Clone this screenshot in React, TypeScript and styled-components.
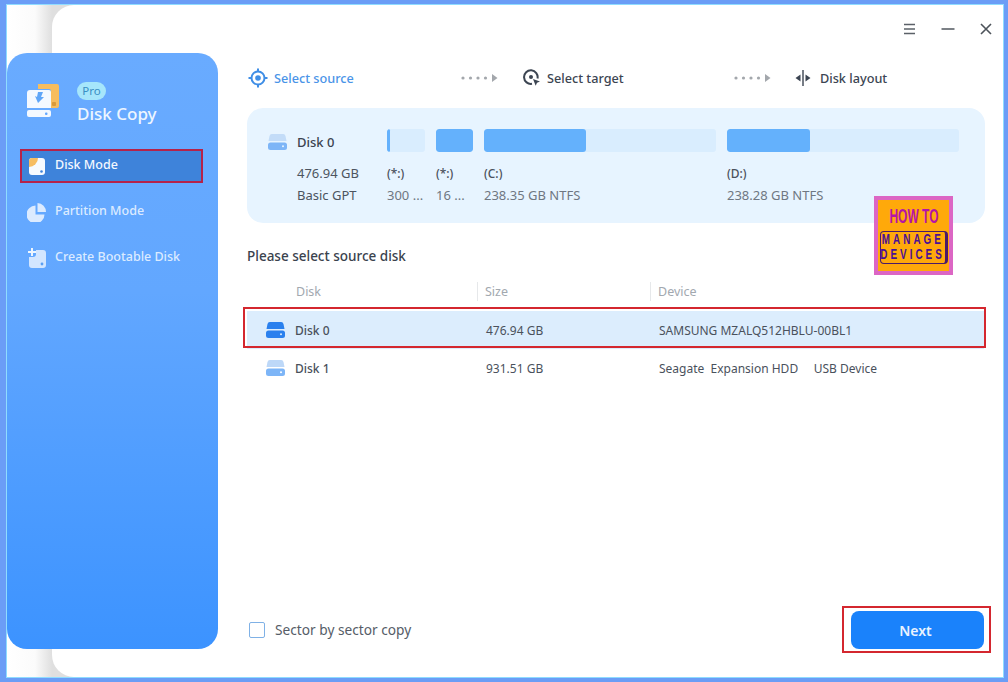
import styled, { createGlobalStyle } from "styled-components";

const GlobalStyle = createGlobalStyle`
  html, body {
    margin: 0;
    padding: 0;
    height: 100%;
    background: #6b9df6;
    font-family: "Noto Sans", "Open Sans", "Liberation Sans", sans-serif;
  }
  * { box-sizing: border-box; }
`;

const Frame = styled.div`
  width: 1008px;
  height: 682px;
  padding: 5px 5px 5px 7px;
  background: #6b9df6;
  overflow: hidden;
`;

const Window = styled.div`
  position: relative;
  display: flex;
  height: 100%;
  background: linear-gradient(90deg, #fff 0, #fbfbfb 28px, #dfdfdf 45px);
  box-shadow: 0 0 0 1px #8fdcff;

  &::before {
    content: "";
    position: absolute;
    inset: 0 0 0 45px;
    background: #fff;
    border-radius: 22px 0 0 22px;
  }
`;

const Sidebar = styled.aside`
  position: relative;
  flex: none;
  width: 211px;
  margin: 48px 0 28px;
  padding-top: 29px;
  border-radius: 20px;
  background: linear-gradient(180deg, #69abff 0%, #62a7ff 40%, #3c93ff 100%);
`;

const Brand = styled.div`
  display: flex;
  align-items: flex-start;
  padding-left: 19px;
  height: 45px;
`;

const BrandText = styled.div`
  margin-left: 17px;
  display: flex;
  flex-direction: column;
  align-items: flex-start;
`;

const ProBadge = styled.span`
  width: 29px;
  height: 18px;
  border-radius: 9px;
  background: #a6e6fb;
  color: #3a8fc4;
  font-size: 11.5px;
  line-height: 18px;
  text-align: center;
`;

const BrandName = styled.span`
  margin-top: 2px;
  color: #eef6ff;
  font-size: 17px;
  line-height: 24px;
  font-weight: 500;
  white-space: nowrap;
`;

const NavList = styled.nav`
  margin: 23px 0 0 14px;
  width: 181px;
  display: flex;
  flex-direction: column;
  gap: 14px;
`;

const NavItem = styled.div<{ $active?: boolean }>`
  height: 32px;
  display: flex;
  align-items: center;
  gap: 8px;
  padding-left: 6px;
  font-size: 12.5px;
  font-weight: 500;
  white-space: nowrap;
  color: ${(p) => (p.$active ? "#f3f8ff" : "#dcebff")};
  background: ${(p) => (p.$active ? "#3e83da" : "transparent")};
  outline: ${(p) => (p.$active ? "2px solid #b5224a" : "none")};
  outline-offset: -1px;
`;

const NavIconSlot = styled.span`
  width: 20px;
  height: 20px;
  display: flex;
  align-items: center;
  justify-content: center;
`;

const NavLabel = styled.span`
  margin-bottom: 4px;
`;

const Content = styled.main`
  position: relative;
  flex: 1;
  min-width: 0;
  display: flex;
  flex-direction: column;
  padding: 0 18px 28px 29px;
`;

const TitleBar = styled.div`
  height: 48px;
  margin-right: -10px;
  padding-top: 17px;
  display: flex;
  justify-content: flex-end;
  gap: 19px;
  align-items: flex-start;
`;

const TitleButton = styled.button`
  width: 19px;
  height: 14px;
  padding: 0;
  border: 0;
  background: none;
  display: flex;
  align-items: center;
  justify-content: center;
`;

const Steps = styled.div`
  height: 55px;
  display: flex;
  align-items: flex-start;
  padding: 13px 0 0 1px;
`;

const Step = styled.div<{ $current?: boolean; $width: number }>`
  width: ${(p) => p.$width}px;
  flex: none;
  display: flex;
  align-items: center;
  gap: 6px;
  height: 24px;
  font-size: 12.7px;
  font-weight: 500;
  white-space: nowrap;
  color: ${(p) => (p.$current ? "#4a94e8" : "#3c4552")};
`;

const Dots = styled.div<{ $width: number }>`
  width: ${(p) => p.$width}px;
  flex: none;
  height: 24px;
  display: flex;
  align-items: center;
`;

const DiskCard = styled.section`
  height: 115px;
  padding: 21px 26px 0 21px;
  border-radius: 16px;
  background: #e7f4ff;
  display: flex;
`;

const DiskInfo = styled.div`
  width: 119px;
  flex: none;
`;

const DiskName = styled.div`
  height: 24px;
  padding-top: 1px;
  display: flex;
  align-items: center;
  gap: 10px;
  font-size: 13px;
  font-weight: 500;
  color: #3b4350;
`;

const CardLines = styled.div`
  margin: 9px 0 0 29px;
  font-size: 13px;
  line-height: 22px;
  color: #4c5460;
`;

const Partitions = styled.div`
  display: flex;
  gap: 11px;
  flex: 1;
`;

const Partition = styled.div<{ $width: number }>`
  width: ${(p) => p.$width}px;
  flex: none;
  white-space: nowrap;
`;

const UsageBar = styled.div`
  height: 23px;
  border-radius: 3px;
  overflow: hidden;
  background: #d9edfe;
`;

const UsageFill = styled.div`
  height: 100%;
  background: #64b1fc;
  border-radius: 3px;
`;

const PartLabel = styled.div`
  margin-top: 11px;
  font-size: 12px;
  line-height: 22px;
  font-weight: 500;
  color: #4a515c;
`;

const PartSize = styled.div`
  font-size: 13px;
  line-height: 21px;
  color: #6f7782;
`;

const SectionTitle = styled.h2`
  margin: 22px 0 0;
  font-size: 13.5px;
  line-height: 22px;
  font-weight: 500;
  color: #3a424d;
`;

const TableHead = styled.div`
  margin-top: 13px;
  height: 22px;
  display: grid;
  grid-template-columns: 230px 173px 1fr;
  align-items: center;
  font-size: 12.5px;
  color: #a2a8af;
`;

const HeadCell = styled.div<{ $first?: boolean }>`
  height: 19px;
  line-height: 19px;
  padding-left: ${(p) => (p.$first ? "49px" : "7px")};
  border-left: ${(p) => (p.$first ? "none" : "1px solid #e6e8ea")};
`;

const Rows = styled.div`
  margin-top: 9px;
  display: flex;
  flex-direction: column;
`;

const Row = styled.div<{ $selected?: boolean }>`
  position: relative;
  height: 38px;
  margin-right: 1px;
  display: grid;
  grid-template-columns: 230px 173px 1fr;
  align-items: center;
  font-size: 12px;
  color: #4a515c;
  background: ${(p) => (p.$selected ? "#dcedfd" : "transparent")};

  ${(p) =>
    p.$selected &&
    `&::after {
      content: "";
      position: absolute;
      inset: -4px -2px 1px -4px;
      border: 2px solid #d4272f;
    }`}
`;

const RowName = styled.div`
  display: flex;
  align-items: center;
  gap: 10px;
  padding-left: 19px;
  font-weight: 500;
`;

const RowCell = styled.div`
  padding-left: 9px;
  white-space: pre;
`;

const Footer = styled.div`
  margin-top: auto;
  display: flex;
  align-items: center;
  justify-content: space-between;
  padding-left: 2px;
`;

const CopyOption = styled.label`
  display: flex;
  align-items: center;
  gap: 10px;
  font-size: 13.7px;
  color: #565d67;
`;

const CopyText = styled.span`
  margin-bottom: 2px;
`;

const CheckBox = styled.span`
  width: 16px;
  height: 16px;
  border: 1.5px solid #7fb1e6;
  border-radius: 2px;
  background: #fff;
`;

const NextFrame = styled.div`
  padding: 5px 6px 4px 9px;
  margin: -5px -6px -4px 0;
  outline: 2px solid #d4272f;
  outline-offset: -2px;
`;

const NextButton = styled.button`
  display: block;
  width: 133px;
  height: 38px;
  margin-right: 1px;
  padding: 0 4px 0 0;
  border: 0;
  border-radius: 8px;
  background: #1a82fb;
  color: #e9f3ff;
  font-family: inherit;
  font-size: 14px;
  font-weight: 600;
`;

const Watermark = styled.div`
  position: absolute;
  left: 867px;
  top: 191px;
  width: 79px;
  height: 79px;
  border: 4px solid #dc66c4;
  background: #ffa90a;
  display: flex;
  flex-direction: column;
  align-items: center;
  font-family: "Liberation Sans", sans-serif;
  font-weight: 700;
`;

const HowTo = styled.div`
  margin-top: 5px;
  font-size: 21px;
  line-height: 21px;
  color: #b414a8;
  white-space: nowrap;
  transform: scaleX(0.57);
`;

const ManageBox = styled.div`
  margin-top: 5px;
  width: 68px;
  height: 33px;
  border: 1.5px solid #4a1a6a;
  border-right-width: 3px;
  border-radius: 4px;
  display: flex;
  flex-direction: column;
  align-items: center;
  color: #4a0f96;
`;

const ManageLine = styled.div`
  font-size: 13px;
  line-height: 15px;
  letter-spacing: 4px;
  white-space: nowrap;
  transform: scale(0.76, 1.1);
`;

const BrandIcon = () => (
  <svg width="34" height="36" viewBox="0 0 34 36">
    <path d="M12 2h19a2 2 0 0 1 2 2v20a2 2 0 0 1-2 2h-6V9a2 2 0 0 0-2-2H12z" fill="#f7bd5e" />
    <rect x="26" y="20" width="4" height="4" rx="1" fill="#d99a3a" />
    <path d="M4 8h19a2 2 0 0 1 2 2v16H1V11a3 3 0 0 1 3-3z" fill="#f4f9ff" />
    <path d="M12 10h5l-2 5h3l-6 6-3-7 2 1z" fill="#5fa6f8" />
    <rect x="1" y="28" width="24" height="7" rx="2" fill="#f4f9ff" />
    <rect x="19" y="30.5" width="2.5" height="2.5" rx="1" fill="#62a7ff" />
  </svg>
);

const DiskModeIcon = () => (
  <svg width="18" height="18" viewBox="0 0 18 18">
    <rect x="1" y="1" width="16" height="17" rx="3" fill="#f6faff" />
    <path d="M1 10V4a3 3 0 0 1 3-3h6a9 9 0 0 1-9 9z" fill="#f6bd62" />
    <circle cx="13.5" cy="14.5" r="1.3" fill="#3e83da" />
  </svg>
);

const PartitionIcon = () => (
  <svg width="20" height="20" viewBox="0 0 20 20">
    <path d="M8.5 3.5v9h9a9 9 0 1 1-9-9z" fill="#dcebff" />
    <path d="M10.5 1a9 9 0 0 1 8.500 9h-8.500z" fill="#dcebff" />
  </svg>
);

const BootableIcon = () => (
  <svg width="18" height="20" viewBox="0 0 18 20">
    <path d="M8 2h7a3 3 0 0 1 3 3v12a3 3 0 0 1-3 3H4a3 3 0 0 1-3-3V9h4a3 3 0 0 0 3-3z" fill="#d3e6ff" />
    <path d="M3 0h2v3h3v2H5v3H3V5H0V3h3z" fill="#eef6ff" />
    <circle cx="14" cy="16" r="1.4" fill="#5a9ff2" />
  </svg>
);

const HddIcon = ({ top, bottom, dot }: { top: string; bottom: string; dot: string }) => (
  <svg width="19" height="16" viewBox="0 0 19 16">
    <path d="M4 0h11a2.500 2.500 0 0 1 2.500 2l1 5H.5l1-5A2.500 2.500 0 0 1 4 0z" fill={top} />
    <rect x="0" y="8.500" width="19" height="7.500" rx="2.500" fill={bottom} />
    <circle cx="15" cy="12.200" r="1" fill={dot} />
  </svg>
);

const TargetIcon = () => (
  <svg width="20" height="20" viewBox="0 0 20 20" fill="none" stroke="#3f8ee6">
    <circle cx="10" cy="10" r="6.500" strokeWidth="2" />
    <circle cx="10" cy="10" r="2.800" fill="#3f8ee6" stroke="none" />
    <path d="M10 .5v3.500M10 16v3.500M.5 10H4M16 10h3.500" strokeWidth="2" />
  </svg>
);

const SearchTargetIcon = () => (
  <svg width="18" height="18" viewBox="0 0 18 18" fill="none" stroke="#3c4552">
    <path d="M14.500 9.500A6.800 6.800 0 1 0 9 14.800" strokeWidth="2" />
    <circle cx="8" cy="8" r="2" fill="#3c4552" stroke="none" />
    <path d="M10 10l7 2.500-3 1.300-1.300 3z" fill="#3c4552" stroke="none" />
  </svg>
);

const LayoutIcon = () => (
  <svg width="20" height="16" viewBox="0 0 20 16" fill="#3c4552">
    <rect x="8.300" y="0" width="1.400" height="16" />
    <path d="M6.500 4.500v7L1.500 8zM11.500 4.500v7l5-3.500z" />
  </svg>
);

const DotArrow = () => (
  <svg width="38" height="10" viewBox="0 0 38 10" fill="#a3a7ac">
    <circle cx="3" cy="5" r="1.600" />
    <circle cx="10.500" cy="5" r="1.600" />
    <circle cx="18" cy="5" r="1.600" />
    <circle cx="25.500" cy="5" r="1.600" />
    <path d="M32 1l5.500 4L32 9z" />
  </svg>
);

const MenuIcon = () => (
  <svg width="13" height="12" viewBox="0 0 13 12" stroke="#5b6168" strokeWidth="1.600">
    <path d="M1 1.500h11M1 6h11M1 10.500h11" />
  </svg>
);

const MinIcon = () => (
  <svg width="14" height="12" viewBox="0 0 14 12" stroke="#5b6168" strokeWidth="1.600">
    <path d="M0.500 6h13" />
  </svg>
);

const CloseIcon = () => (
  <svg width="12" height="12" viewBox="0 0 12 12" stroke="#4d535a" strokeWidth="1.600">
    <path d="M1 1l10 10M11 1L1 11" />
  </svg>
);

const partitions = [
  { label: "(*:)", size: "300 ...", width: 38, used: 3 },
  { label: "(*:)", size: "16 ...", width: 37, used: 37 },
  { label: "(C:)", size: "238.35 GB NTFS", width: 232, used: 102 },
  { label: "(D:)", size: "238.28 GB NTFS", width: 232, used: 83 },
];

const disks = [
  { name: "Disk 0", size: "476.94 GB", device: "SAMSUNG MZALQ512HBLU-00BL1", selected: true },
  { name: "Disk 1", size: "931.51 GB", device: "Seagate  Expansion HDD     USB Device", selected: false },
];

export default function App() {
  return (
    <>
      <GlobalStyle />
      <Frame>
        <Window>
          <Sidebar>
            <Brand>
              <BrandIcon />
              <BrandText>
                <ProBadge>Pro</ProBadge>
                <BrandName>Disk Copy</BrandName>
              </BrandText>
            </Brand>
            <NavList>
              <NavItem $active>
                <NavIconSlot><DiskModeIcon /></NavIconSlot>
                <NavLabel>Disk Mode</NavLabel>
              </NavItem>
              <NavItem>
                <NavIconSlot><PartitionIcon /></NavIconSlot>
                <NavLabel>Partition Mode</NavLabel>
              </NavItem>
              <NavItem>
                <NavIconSlot><BootableIcon /></NavIconSlot>
                <NavLabel>Create Bootable Disk</NavLabel>
              </NavItem>
            </NavList>
          </Sidebar>
          <Content>
            <TitleBar>
              <TitleButton aria-label="Menu"><MenuIcon /></TitleButton>
              <TitleButton aria-label="Minimize"><MinIcon /></TitleButton>
              <TitleButton aria-label="Close"><CloseIcon /></TitleButton>
            </TitleBar>
            <Steps>
              <Step $current $width={212}>
                <TargetIcon />
                Select source
              </Step>
              <Dots $width={63}><DotArrow /></Dots>
              <Step $width={210}>
                <SearchTargetIcon />
                Select target
              </Step>
              <Dots $width={61}><DotArrow /></Dots>
              <Step $width={120}>
                <LayoutIcon />
                Disk layout
              </Step>
            </Steps>
            <DiskCard>
              <DiskInfo>
                <DiskName>
                  <HddIcon top="#c3dcf8" bottom="#7db5f7" dot="#e7f4ff" />
                  Disk 0
                </DiskName>
                <CardLines>
                  476.94 GB
                  <br />
                  Basic GPT
                </CardLines>
              </DiskInfo>
              <Partitions>
                {partitions.map((part, i) => (
                  <Partition key={i} $width={part.width}>
                    <UsageBar>
                      <UsageFill style={{ width: part.used }} />
                    </UsageBar>
                    <PartLabel>{part.label}</PartLabel>
                    <PartSize>{part.size}</PartSize>
                  </Partition>
                ))}
              </Partitions>
            </DiskCard>
            <SectionTitle>Please select source disk</SectionTitle>
            <TableHead>
              <HeadCell $first>Disk</HeadCell>
              <HeadCell>Size</HeadCell>
              <HeadCell>Device</HeadCell>
            </TableHead>
            <Rows>
              {disks.map((disk) => (
                <Row key={disk.name} $selected={disk.selected}>
                  <RowName>
                    {disk.selected ? (
                      <HddIcon top="#2a80ee" bottom="#2a80ee" dot="#dcedfd" />
                    ) : (
                      <HddIcon top="#bdd8f8" bottom="#7db5f7" dot="#fff" />
                    )}
                    {disk.name}
                  </RowName>
                  <RowCell>{disk.size}</RowCell>
                  <RowCell>{disk.device}</RowCell>
                </Row>
              ))}
            </Rows>
            <Footer>
              <CopyOption>
                <CheckBox />
                <CopyText>Sector by sector copy</CopyText>
              </CopyOption>
              <NextFrame>
                <NextButton>Next</NextButton>
              </NextFrame>
            </Footer>
          </Content>
          <Watermark>
            <HowTo>HOW TO</HowTo>
            <ManageBox>
              <ManageLine>MANAGE</ManageLine>
              <ManageLine>DEVICES</ManageLine>
            </ManageBox>
          </Watermark>
        </Window>
      </Frame>
    </>
  );
}
